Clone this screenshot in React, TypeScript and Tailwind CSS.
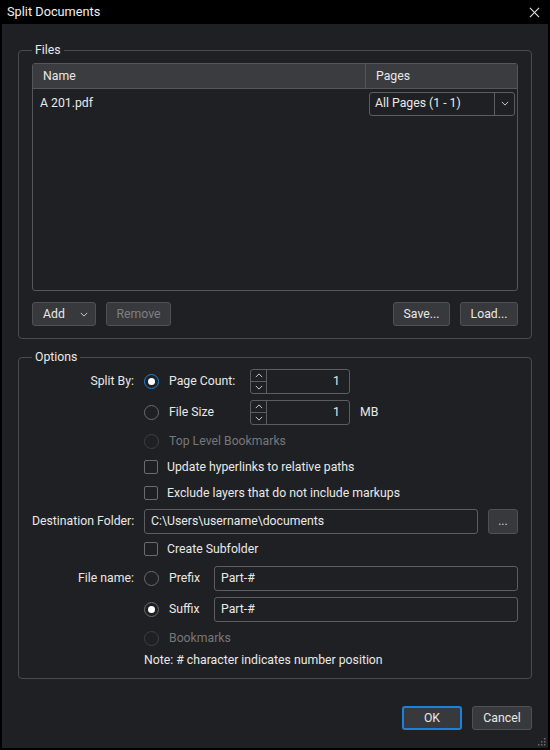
import React from 'react'

const font = { fontFamily: 'Roboto, "Liberation Sans", sans-serif' }

function Chevron({ up = false, className = '' }: { up?: boolean; className?: string }) {
  return (
    <svg viewBox="0 0 10 6" className={className} fill="none" stroke="currentColor" strokeWidth="1.2">
      {up ? <polyline points="1,5 5,1 9,5" /> : <polyline points="1,1 5,5 9,1" />}
    </svg>
  )
}

function Radio({ checked = false, focused = false, disabled = false }: { checked?: boolean; focused?: boolean; disabled?: boolean }) {
  return (
    <span
      className={
        'flex h-[15px] w-[15px] flex-shrink-0 items-center justify-center rounded-full border ' +
        (focused ? 'border-[#1c82d9] border-[1.5px]' : disabled ? 'border-[#3e3f42]' : 'border-[#6a6b6e]')
      }
    >
      {checked && <span className="h-[7px] w-[7px] rounded-full bg-white" />}
    </span>
  )
}

function Checkbox() {
  return <span className="h-[14px] w-[14px] flex-shrink-0 rounded-[2px] border border-[#6a6b6e]" />
}

function Spinner({ value }: { value: string }) {
  return (
    <div className="flex h-[25px] w-[100px] rounded-[3px] border border-[#5c5d60]">
      <div className="flex w-[16px] flex-col border-r border-[#5c5d60] text-[#d0d0d0]">
        <div className="flex flex-1 items-center justify-center border-b border-[#5c5d60]">
          <Chevron up className="w-[8px] h-[5px]" />
        </div>
        <div className="flex flex-1 items-center justify-center">
          <Chevron className="w-[8px] h-[5px]" />
        </div>
      </div>
      <div className="flex flex-1 items-center justify-end pr-[9px]">{value}</div>
    </div>
  )
}

function Btn({ children, className = '' }: { children: React.ReactNode; className?: string }) {
  return (
    <div
      className={
        'flex h-[24px] items-center justify-center rounded-[3px] border border-[#505154] bg-[#38393c] ' + className
      }
    >
      {children}
    </div>
  )
}

function Input({ value, className = '' }: { value: string; className?: string }) {
  return (
    <div className={'flex h-[25px] items-center rounded-[3px] border border-[#5c5d60] px-[6px] ' + className}>
      {value}
    </div>
  )
}

export default function App() {
  return (
    <div className="flex h-[750px] w-[550px] flex-col bg-black text-[12.25px] text-[#e8e8e8]" style={font}>
      <div className="flex h-[24px] items-center justify-between pl-[7px] pr-[10px] text-[12.75px] text-[#f0f0f0]">
        <span>Split Documents</span>
        <svg viewBox="0 0 12 12" className="h-[11px] w-[11px]" stroke="#e0e0e0" strokeWidth="1.2">
          <line x1="1" y1="1" x2="11" y2="11" />
          <line x1="11" y1="1" x2="1" y2="11" />
        </svg>
      </div>

      <div className="relative mx-[2px] mb-[2px] flex flex-1 flex-col bg-[#1f2023] px-[16px] pt-[18px]">
        <fieldset className="rounded-[4px] border border-[#4a4b4e] px-[13px] pb-[12px] pt-[5px]">
          <legend className="px-[3px] leading-[16px]">Files</legend>
          <div className="flex h-[228px] flex-col overflow-hidden rounded-[3px] border border-[#55565a]">
            <div className="flex h-[25px] flex-shrink-0 border-b border-[#55565a] bg-[#3b3c3f]">
              <div className="flex flex-1 items-center border-r border-[#55565a] pl-[10px]">Name</div>
              <div className="flex w-[151px] items-center pl-[10px]">Pages</div>
            </div>
            <div className="flex h-[29px] items-center pl-[7px] pr-[2px]">
              <span className="flex-1">A 201.pdf</span>
              <div className="flex h-[24px] w-[146px] rounded-[3px] border border-[#5c5d60]">
                <div className="flex flex-1 items-center pl-[5px]">All Pages (1 - 1)</div>
                <div className="flex w-[20px] items-center justify-center border-l border-[#5c5d60] text-[#cfcfcf]">
                  <Chevron className="h-[5px] w-[8px]" />
                </div>
              </div>
            </div>
          </div>
          <div className="mt-[11px] flex items-center">
            <div className="flex h-[24px] w-[64px] items-center justify-between rounded-[3px] border border-[#505154] bg-[#38393c] pl-[10px] pr-[7px]">
              <span>Add</span>
              <Chevron className="h-[5px] w-[8px] text-[#cfcfcf]" />
            </div>
            <Btn className="ml-[10px] w-[65px] text-[#7e7f82]">Remove</Btn>
            <div className="flex-1" />
            <Btn className="w-[57px]">Save...</Btn>
            <Btn className="ml-[10px] w-[58px]">Load...</Btn>
          </div>
        </fieldset>

        <fieldset className="mt-[10px] rounded-[4px] border border-[#4a4b4e] px-[13px] pb-[8px] pt-[4px]">
          <legend className="px-[3px] leading-[16px]">Options</legend>

          <div className="flex h-[25px] items-center gap-[10px]">
            <span className="w-[102px] text-right">Split By:</span>
            <div className="flex w-[96px] items-center gap-[10px]">
              <Radio checked focused />
              <span>Page Count:</span>
            </div>
            <Spinner value="1" />
          </div>

          <div className="mt-[6px] flex h-[25px] items-center gap-[10px]">
            <span className="w-[102px]" />
            <div className="flex w-[96px] items-center gap-[10px]">
              <Radio />
              <span>File Size</span>
            </div>
            <Spinner value="1" />
            <span>MB</span>
          </div>

          <div className="mt-[4px] flex h-[24px] items-center gap-[10px]">
            <span className="w-[102px]" />
            <Radio disabled />
            <span className="text-[#76777a]">Top Level Bookmarks</span>
          </div>

          <div className="mt-[2px] flex h-[24px] items-center gap-[9px]">
            <span className="w-[102px] mr-[1px]" />
            <Checkbox />
            <span>Update hyperlinks to relative paths</span>
          </div>

          <div className="mt-[2px] flex h-[24px] items-center gap-[9px]">
            <span className="w-[102px] mr-[1px]" />
            <Checkbox />
            <span>Exclude layers that do not include markups</span>
          </div>

          <div className="mt-[4px] flex h-[25px] items-center gap-[10px]">
            <span className="w-[102px] text-right whitespace-nowrap">Destination Folder:</span>
            <Input value="C:\Users\username\documents" className="flex-1" />
            <Btn className="h-[25px] w-[30px] text-[#cfcfcf]">...</Btn>
          </div>

          <div className="mt-[3px] flex h-[24px] items-center gap-[9px]">
            <span className="w-[102px] mr-[1px]" />
            <Checkbox />
            <span>Create Subfolder</span>
          </div>

          <div className="mt-[5px] flex h-[25px] items-center gap-[10px]">
            <span className="w-[102px] text-right">File name:</span>
            <div className="flex w-[60px] items-center gap-[10px]">
              <Radio />
              <span>Prefix</span>
            </div>
            <Input value="Part-#" className="flex-1" />
          </div>

          <div className="mt-[6px] flex h-[25px] items-center gap-[10px]">
            <span className="w-[102px]" />
            <div className="flex w-[60px] items-center gap-[10px]">
              <Radio checked />
              <span>Suffix</span>
            </div>
            <Input value="Part-#" className="flex-1" />
          </div>

          <div className="mt-[4px] flex h-[24px] items-center gap-[10px]">
            <span className="w-[102px]" />
            <Radio disabled />
            <span className="text-[#76777a]">Bookmarks</span>
          </div>

          <div className="flex h-[20px] items-center gap-[10px]">
            <span className="w-[102px]" />
            <span>Note: # character indicates number position</span>
          </div>
        </fieldset>

        <div className="mt-[27px] flex justify-end gap-[10px]">
          <div className="flex h-[24px] w-[60px] items-center justify-center rounded-[3px] border-2 border-[#1c82d9] bg-[#38393c]">
            OK
          </div>
          <Btn className="w-[60px]">Cancel</Btn>
        </div>

        <svg viewBox="0 0 8 8" className="absolute bottom-[2px] right-[2px] h-[8px] w-[8px]" fill="#6a6b6e">
          <rect x="6" y="0" width="1.5" height="1.5" />
          <rect x="3" y="3" width="1.5" height="1.5" />
          <rect x="6" y="3" width="1.5" height="1.5" />
          <rect x="0" y="6" width="1.5" height="1.5" />
          <rect x="3" y="6" width="1.5" height="1.5" />
          <rect x="6" y="6" width="1.5" height="1.5" />
        </svg>
      </div>
    </div>
  )
}
